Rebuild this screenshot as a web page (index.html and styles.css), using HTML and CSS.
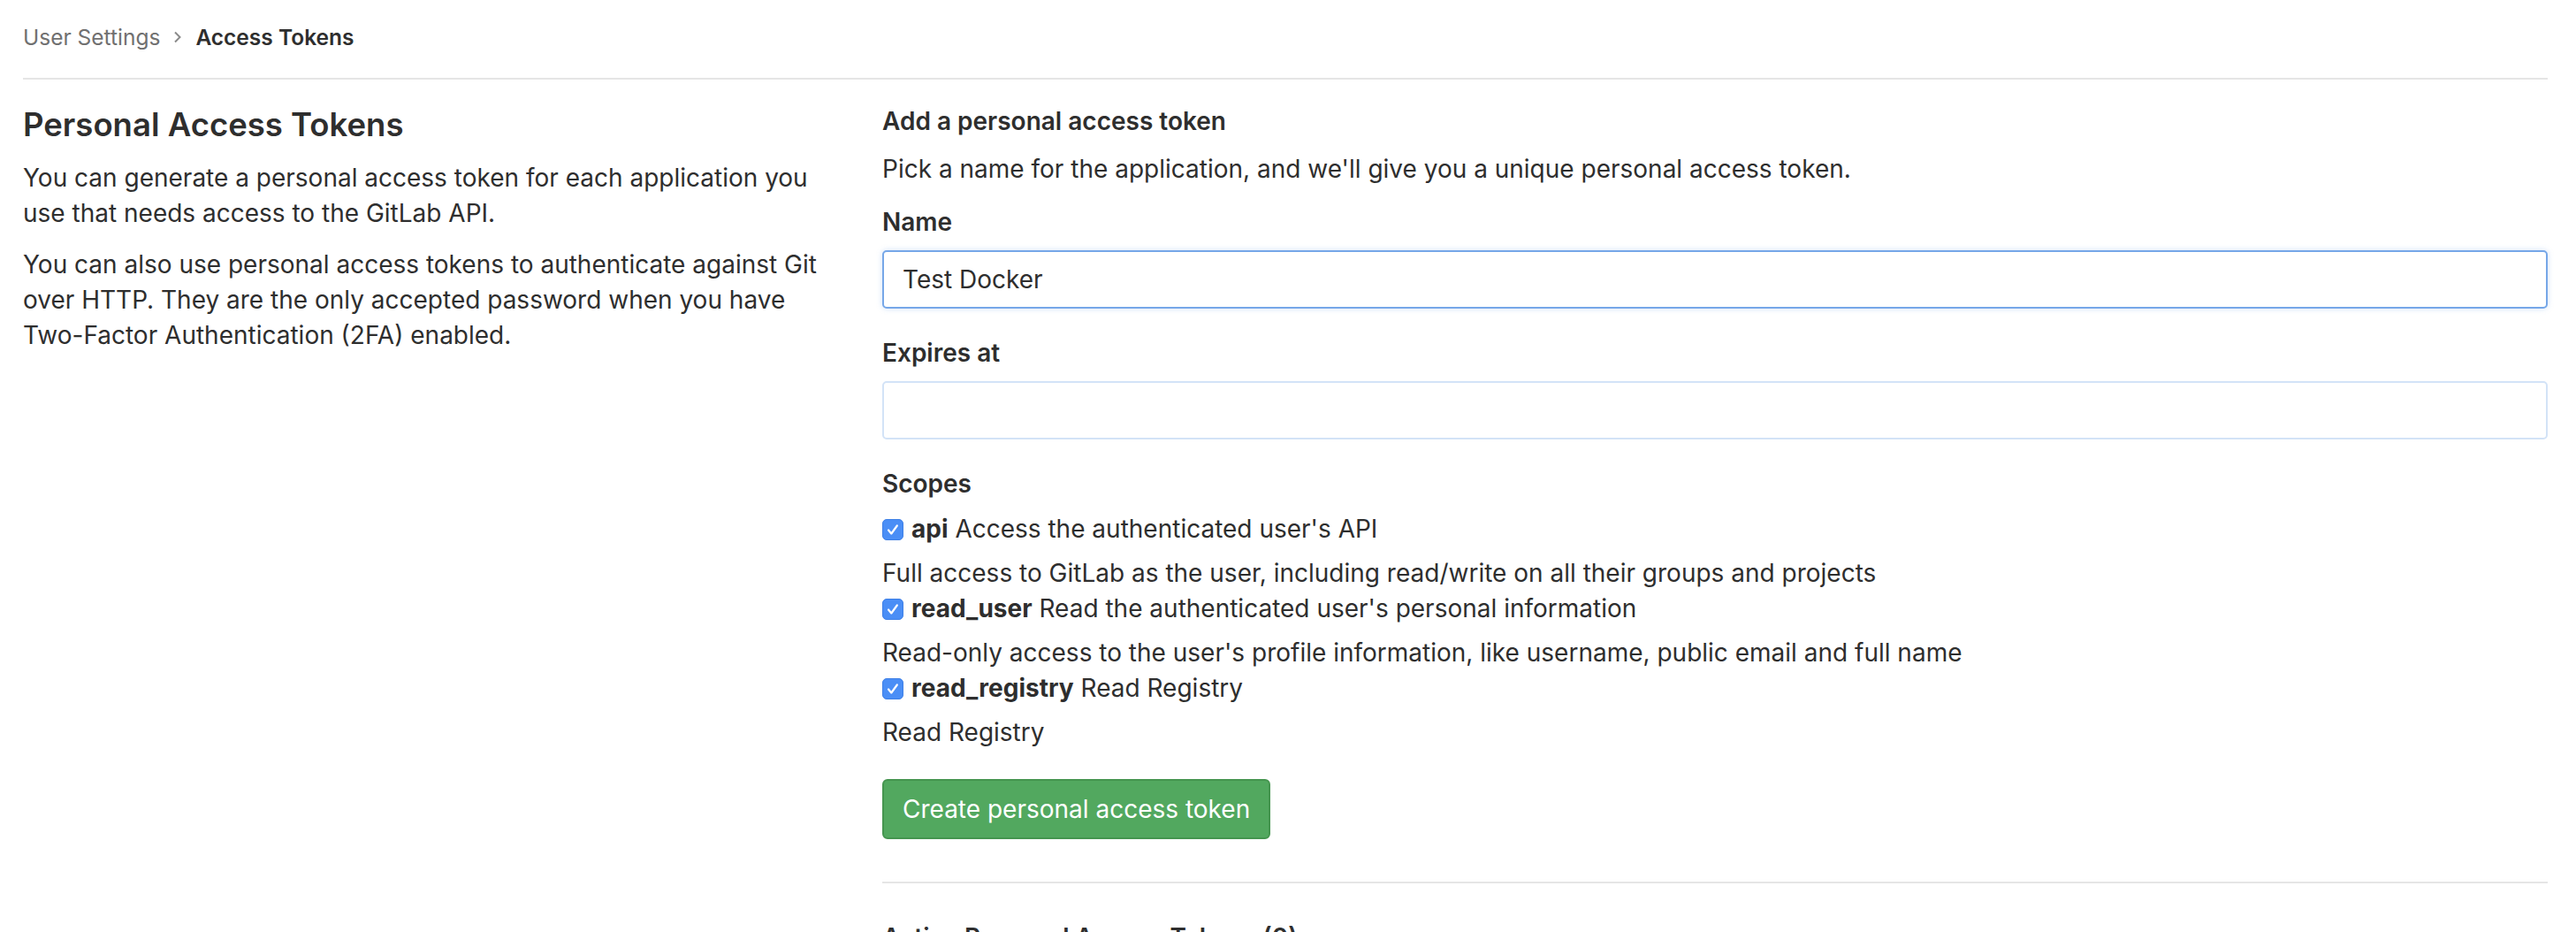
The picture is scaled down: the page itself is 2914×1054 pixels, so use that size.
FILE: index.html
```html
<!DOCTYPE html>
<html lang="en">
<head>
<meta charset="utf-8">
<title>Access Tokens · User Settings</title>
<link rel="stylesheet" href="styles.css">
</head>
<body>
<div class="page">
  <nav class="breadcrumbs">
    <span class="crumb">User Settings</span>
    <svg class="chev" width="10" height="14" viewBox="0 0 10 14"><path d="M2 1.5 L7.5 7 L2 12.5" fill="none" stroke="#8a8a8a" stroke-width="2"/></svg>
    <span class="crumb current">Access Tokens</span>
  </nav>

  <div class="row">
    <div class="sidebar">
      <h4 class="side-title">Personal Access Tokens</h4>
      <p class="side-text">You can generate a personal access token for each application you use that needs access to the GitLab API.</p>
      <p class="side-text">You can also use personal access tokens to authenticate against Git over HTTP. They are the only accepted password when you have Two-Factor Authentication (2FA) enabled.</p>
    </div>

    <div class="main">
      <h5 class="sub-title">Add a personal access token</h5>
      <p class="intro">Pick a name for the application, and we'll give you a unique personal access token.</p>

      <div class="form-group">
        <label class="label" for="name">Name</label>
        <input class="input focused" id="name" type="text" value="Test Docker">
      </div>

      <div class="form-group">
        <label class="label" for="exp">Expires at</label>
        <input class="input soft" id="exp" type="text" value="">
      </div>

      <div class="scopes">
        <div class="label scopes-label">Scopes</div>
        <div class="scope">
          <div class="scope-line"><span class="check"><svg width="24" height="24" viewBox="0 0 24 24"><rect x="0.5" y="0.5" width="23" height="23" rx="4.5" fill="#4a8ef6" stroke="#3d7fe6"/><path d="M7 12.5 L10.3 16.5 L16.8 7.5" fill="none" stroke="#fff" stroke-width="2.2" stroke-linecap="round" stroke-linejoin="round"/></svg></span><b>api</b> Access the authenticated user's API</div>
          <div class="help">Full access to GitLab as the user, including read/write on all their groups and projects</div>
        </div>
        <div class="scope">
          <div class="scope-line"><span class="check"><svg width="24" height="24" viewBox="0 0 24 24"><rect x="0.5" y="0.5" width="23" height="23" rx="4.5" fill="#4a8ef6" stroke="#3d7fe6"/><path d="M7 12.5 L10.3 16.5 L16.8 7.5" fill="none" stroke="#fff" stroke-width="2.2" stroke-linecap="round" stroke-linejoin="round"/></svg></span><b>read_user</b> Read the authenticated user's personal information</div>
          <div class="help">Read-only access to the user's profile information, like username, public email and full name</div>
        </div>
        <div class="scope">
          <div class="scope-line"><span class="check"><svg width="24" height="24" viewBox="0 0 24 24"><rect x="0.5" y="0.5" width="23" height="23" rx="4.5" fill="#4a8ef6" stroke="#3d7fe6"/><path d="M7 12.5 L10.3 16.5 L16.8 7.5" fill="none" stroke="#fff" stroke-width="2.2" stroke-linecap="round" stroke-linejoin="round"/></svg></span><b>read_registry</b> Read Registry</div>
          <div class="help">Read Registry</div>
        </div>
      </div>

      <button class="btn-create" type="button">Create personal access token</button>

      <hr class="divider">

      <h5 class="sub-title active-title">Active Personal Access Tokens (0)</h5>
    </div>
  </div>
</div>
</body>
</html>
```

FILE: styles.css
```css
html, body {
  margin: 0;
  padding: 0;
  background: #ffffff;
}

body {
  font-family: Inter, "Noto Sans", "Liberation Sans", sans-serif;
  font-size: 28px;
  line-height: 40px;
  color: #2e2e2e;
}

.page {
  padding: 0 32px 0 26px;
}

.breadcrumbs {
  height: 88px;
  box-sizing: content-box;
  border-bottom: 2px solid #e5e5e5;
  display: flex;
  align-items: center;
  font-size: 24.5px;
  line-height: 36px;
}

.breadcrumbs .crumb {
  color: #707070;
  position: relative;
  top: -2px;
}

.breadcrumbs .current {
  color: #2e2e2e;
  font-weight: 600;
}

.chev {
  margin: 0 15px 0 15px;
  position: relative;
  top: -2px;
}

.row {
  display: grid;
  grid-template-columns: 912px 1fr;
  column-gap: 60px;
  margin-top: 32px;
}

.side-title {
  margin: 0 0 21px;
  font-size: 36.5px;
  line-height: 38px;
  font-weight: 600;
}

.side-text {
  margin: 0 0 18px;
}

.sub-title {
  margin: 0;
  font-size: 28px;
  line-height: 31px;
  font-weight: 600;
}

.intro {
  margin: 18px 0 20px;
}

.form-group {
  margin-bottom: 30px;
}

.label {
  display: block;
  font-weight: 600;
  margin-bottom: 12px;
}

.input {
  display: block;
  width: 100%;
  box-sizing: border-box;
  height: 66px;
  padding: 0 21px;
  font-family: inherit;
  font-size: 28px;
  color: #2e2e2e;
  background: #fff;
  border-radius: 5px;
  outline: none;
}

.input.focused {
  border: 2px solid #76a7e8;
  box-shadow: 0 0 6px rgba(118, 167, 232, 0.35);
}

.input.soft {
  border: 2px solid #d3e3f7;
}

.scopes-label {
  margin-bottom: 11px;
}

.scope-line b {
  font-weight: 700;
}

.check {
  display: inline-block;
  width: 24px;
  height: 24px;
  margin-right: 9px;
  vertical-align: -3px;
}

.check svg {
  display: block;
}

.help {
  margin-top: 10px;
}

.btn-create {
  display: block;
  margin-top: 33px;
  height: 68px;
  padding: 0 21px;
  font-family: inherit;
  font-size: 28px;
  line-height: 40px;
  color: #ffffff;
  background: #52a85f;
  border: 2px solid #45954f;
  border-radius: 6px;
}

.divider {
  margin: 48px 0 0;
  border: 0;
  border-top: 2px solid #e5e5e5;
  height: 0;
}

.active-title {
  margin-top: 46px;
}
```
